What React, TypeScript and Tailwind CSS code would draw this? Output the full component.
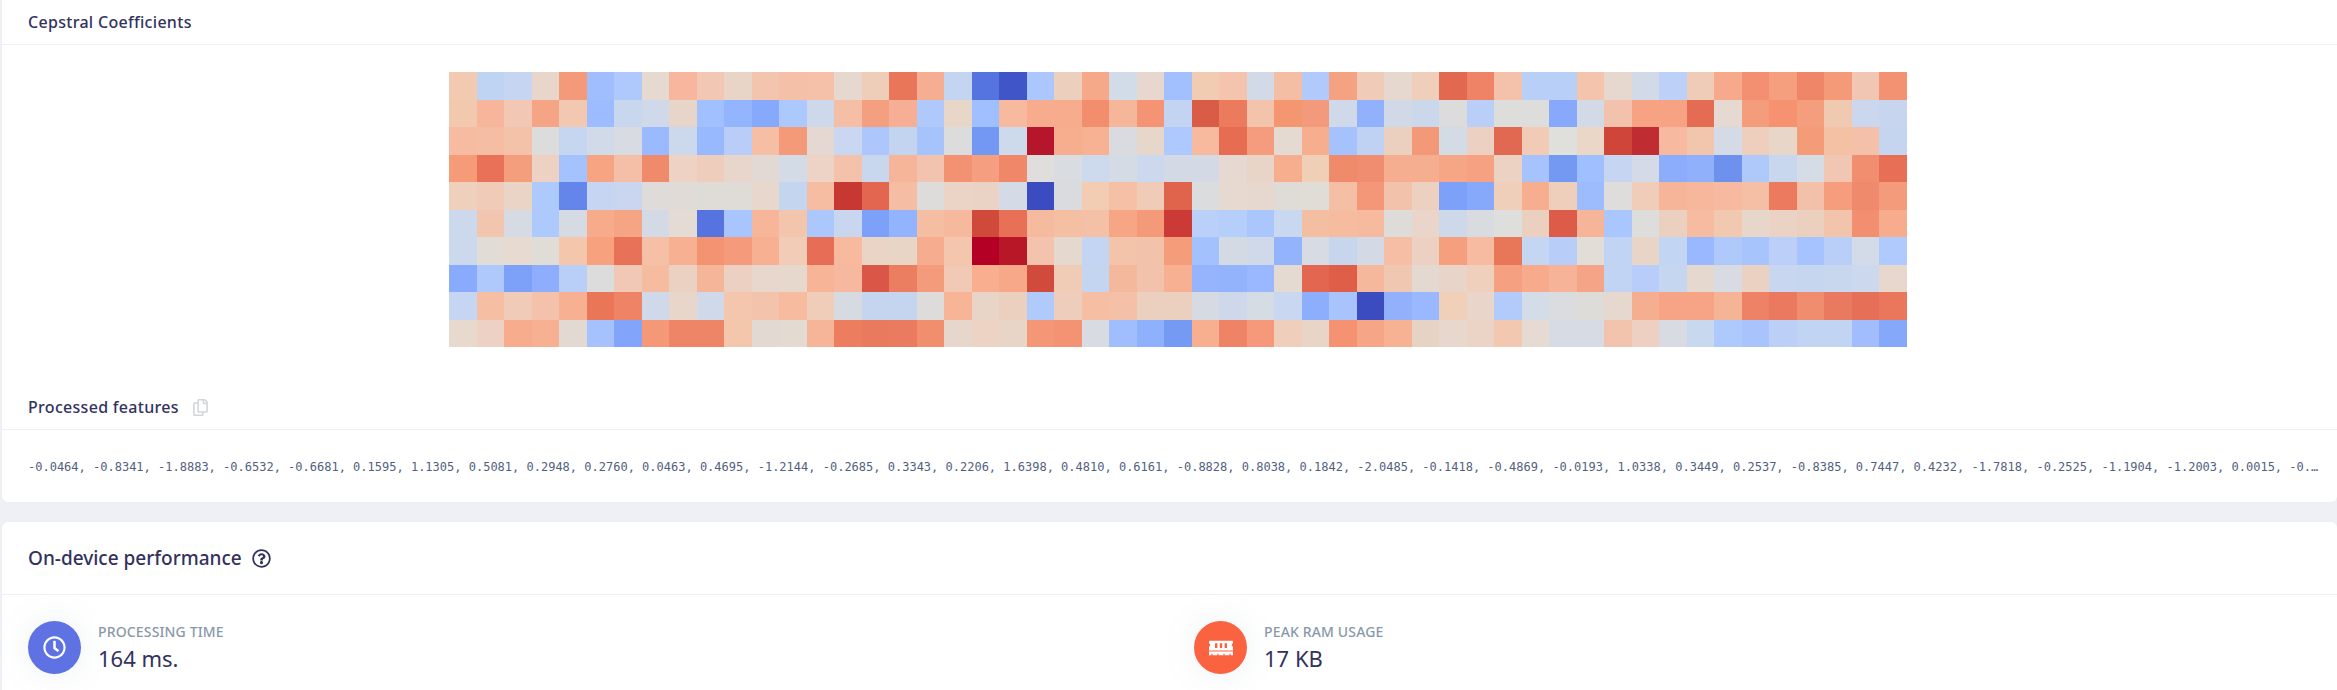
import { FaMemory, FaRegClock, FaRegCopy, FaRegQuestionCircle } from "react-icons/fa";

const rows = [
"f2c9b1 bfd3f3 c5d5f2 e8d6ca f49a7b a0bdfe afc9fc e6d9d0 f7b69d f2c8b5 e8d5c8 f3c5af f5c0a8 f5c1a9 e6d7cf eecdb9 ea7659 f6ae93 c4d5f2 5674e0 4055c8 abc7fd edcfbd f6a988 d2dbe8 e7d7ce a2bffe f1cbb2 f4c4ad d2dae8 f4bea5 b1cafb f5a283 f0cbb7 e6d7cf efcfba e26850 ef8366 f4c1aa b8cff8 b8cff8 f4c4ac e6d8ce d2dae7 bdd0f7 efccb7 f6a98b f29071 f59f7f ef8668 f49a78 f1c6b2 f39272",
"f2c8ae f7b69c f2c7b3 f5a586 f2c8b1 9cbcff c9d7ee cfd9ea e8d5c9 a0c0ff 93b5fe 86a9fb acc8fd cdd8ea f4bfa5 f49f80 f6af94 afc9fc e8d6c9 a0bffe f7ba9f f7ac8e f7ac8e f28e6d f6b69a f49475 c2d4f1 d85c46 ec7a5c f4c3ab f4966f f49a7c cfd9ea 92b1fd d1d9e6 cbd8ec dcdcdc b9cff8 dddddb dddddb 87a8fb d2dae7 f3c2ad f6a283 f6a283 e36c52 e5d9d1 f49c7c f6926f f59e7e efcab0 cad7ef c7d5ee",
"f7bba1 f5bda3 f3c2a9 dddcdc c6d5f0 d0dae8 d8dbe2 9ab9ff ccd9ec 98b9fe bacdf8 f5bea5 f49a79 e5d8d2 c9d8f0 adc7fc c2d4f0 a6c3fc dcdcdc 7398f3 ccdaec b5162b f7ae8f f7b294 d9dbe0 e7d6ca aec9fd f7ba9f e66d52 f49c7d e5dad2 f6ae8f a6c2fd bfd2f4 ecd0bf f49978 d3dbe5 ecd1c2 e26951 f2cbb6 dfdfdc ead7c8 cf453a bf2c32 f7b9a0 f2c5ad d4dbe6 eecfbd e8d7c8 f49b77 f4c1a4 f4c0a9 c5d5f0",
"f59b78 e87158 f59e7e edd2c4 a4c2fe f7a482 f5bea7 ef8a6a eed2c3 efcdbc e8d6cd e2d9d4 d3dbe6 ecd3c5 f4c2ab c8d7ee f6b498 f2c3ae f39272 f59e80 ef8768 dfdedc d9dce0 cdd9ec d5dbe5 ccd8ee d3dae6 d3dae6 e5d9d1 e9d4c8 f6ae8e efcfb6 ef8a6b f08d70 f6ae90 f6ae90 f6a585 f6a182 ecd2c3 a7c3fd 7399f2 a0bffe c6d5f2 d4dae7 8cacfc 90b0fc 6f91ee b0c9fb c9d7ee d6dce5 f1c7b3 f08e6f e76f56",
"eed0bd f0cbb8 ead4c6 aec9fc 6485ea c5d5f2 cad6ef dfdbd8 e0dbd7 dfdbd7 dfdbd6 e7d7cc c4d5f0 f6bda2 c83833 e26650 f5bea4 dedcda ebd4c6 ead3c4 d4dbe6 3a4cc0 dadbde f2ccb3 f5c0a6 f0ccb8 e0634c dadcde e6d9cf e6d8cf dfdcd8 e0dcd6 f5bfa6 f49778 f2c3aa ecd1c1 7da0f9 87a9fb efcfba f7ae8f edcfbc 9cbcfd dedddb f0cdb8 f6b498 f6b79c f7baa1 f4bfa5 eb7a5e f3c0a9 f59d7d ef8a6c f49b7c",
"ccd9ec f2c5ae d5dae3 aec9fc d6dbe3 f7ab8b f5a583 d3dae5 e3dbd4 5673e0 a9c5fe f7b599 f4c5ad acc7fc c8d7ef 7da0f8 92b4fe f5bea3 f6b99e d04a3c e77056 f6ba9f f4bfa3 f4c0a6 f6a685 f49a79 cb3a36 bad0f9 b6cefa abc6fd c9d8f1 f4bea3 f5bc9f f6ba9f dedcd8 e9d5c9 cdd9ea d8dce0 dedfdc ebd0bf dc5c49 f6b598 aac6ff dddedc ecd0bf f6bba1 f1c8b0 e6d7ca ead3c5 ebd0c0 f2c4ab f18f70 f6ac8d",
"ccd9ec e1dcd6 e7dad0 e0dcd6 f4c6ab f7a17f e87258 f5c0a5 f7b091 f49372 f59a7b f7b092 f2ccb7 e86d56 f7ba9f e9d4c6 e8d5c6 f6ad8f f5c6ae b30024 b81728 f4c3ad e5d9cf c3d5f3 f3c4aa f3c2aa f59c7a a3c1fd d4dae4 cfd9e9 93b3fd d6dbe4 c7d6ed d4dae5 f6bfa5 ecd1c2 f59f7e f7bba2 e87659 c5d6f2 b8cdf8 e2ddd6 c2d4f3 e9d4c8 c2d5f2 99b8ff b0c9fb a8c4fc bbcff8 a6c3ff b9cff8 d3dbe8 b0cafd",
"88abfd afc9fc 7da0f8 8eadfd b9cff8 dcdcdc f1c8b6 f5bca0 ebd1c2 f4b598 ecd1c2 e7d7cd e7d8ce f7b496 f6b99f da5747 eb7d60 f39b7a f2c9b4 f8ae8f f6a888 d04b3c f0cbb6 c4d5f2 f4b89c f3c2aa f7b091 96b4fd 93b3fd 99b8ff e4dad2 e36650 de5e48 f5b89d f0c8b2 e4d9d1 e8d4c9 eed0bd f5a080 f7ab8c f6b397 f6a487 c2d4f3 b8cdf9 c5d6f0 e5d8cf d8dbe2 ebd1c2 c8d7ef c7d6ef c9d7ee ccd8ed e8d7cd",
"c6d5f1 f6bea3 f0cbb8 f4c1aa f7b092 ea7658 ee8366 cfd9ea e8d6cb cfd9ea f4c6ad f3c3ab f7bba0 efcdb9 d6dbe2 c5d4ef c5d4ef dedcda f7b497 e8d5c8 ebd0c0 b0cafc eecdbc f6bea2 f4c0a7 ebd0c0 ebd0bf d6dbe3 cfd8eb d5dce4 c9d8f0 8dadfd a9c4fd 3a4cc0 93b0fd 99b8ff f0d0b8 e9d5c9 b3cbfb d4dce7 dadce0 dedcd9 e6d8ce f6ae90 f6a485 f6a485 f5b496 ed8266 ea7960 f08d6f e97a5f e66f58 ea775c",
"e8d9ce ecd1c4 f7ac8e f7b092 e2d9d3 a5c2fe 82a4fb f49877 ef8567 ef8567 f4c6ac e2d9d3 e3dad2 f6b598 ec7d5f ea7a5e eb7b60 f08e6e e7d6cc edd3c4 e9d4c8 f49776 f49374 d8dbe2 a0befe 8fb0fd 759af3 f7af90 ef8366 f5997a efcebb e8d5c8 f49272 f6a687 f7b193 e7d3c3 e7d7cc ebd3c5 f3c8b0 e5dbd2 d6dbe4 d6dbe4 f3c4ad edd0c1 d8dbe1 c8d8ee aec9fc a9c4fc bcd0f7 c2d4f3 c2d4f3 a1bdfd 86a8fb",
].map((r) => r.split(" "));

const features =
  "-0.0464, -0.8341, -1.8883, -0.6532, -0.6681, 0.1595, 1.1305, 0.5081, 0.2948, 0.2760, 0.0463, 0.4695, -1.2144, -0.2685, 0.3343, 0.2206, 1.6398, 0.4810, 0.6161, -0.8828, 0.8038, 0.1842, -2.0485, -0.1418, -0.4869, -0.0193, 1.0338, 0.3449, 0.2537, -0.8385, 0.7447, 0.4232, -1.7818, -0.2525, -1.1904, -1.2003, 0.0015, -0.5218, 0.1204, 0.6630";

function Heatmap() {
  return (
    <svg width="1458" height="275" viewBox="0 0 53 10" preserveAspectRatio="none" className="block" shapeRendering="crispEdges">
      {rows.map((row, y) => row.map((c, x) => <rect key={`${x}-${y}`} x={x} y={y} width="1" height="1" fill={`#${c}`} />))}
    </svg>
  );
}

function Stat({ icon, color, label, value }: { icon: React.ReactNode; color: string; label: string; value: string }) {
  return (
    <div className="flex items-center px-[26px] py-[26px]">
      <div className={`flex h-[53px] w-[53px] shrink-0 items-center justify-center rounded-full text-white shadow-[0_0_32px_rgba(136,152,170,0.15)] ${color}`}>
        {icon}
      </div>
      <div className="ml-[17px]">
        <div className="-mt-[1px] text-[14px] leading-[20px] font-medium tracking-[0.15px] uppercase text-[#8898aa]">{label}</div>
        <div className="mt-[2px] text-[22px] leading-[28px] font-normal text-[#32325d]">{value}</div>
      </div>
    </div>
  );
}

export default function App() {
  return (
    <div className="h-[690px] overflow-hidden bg-[#eef0f5] pl-[2px] font-['Noto_Sans','Open_Sans',sans-serif]">
      <div className="h-[502px] rounded-b-md bg-white">
        <div className="h-[45px] border-b border-[#eff1f5] pl-[26px] pt-[10px] text-[16px] leading-[24px] font-medium tracking-[0.3px] text-[#32325d]">
          Cepstral Coefficients
        </div>
        <div className="flex h-[340px] justify-center pl-[17px] pt-[27px]">
          <Heatmap />
        </div>
        <div className="flex h-[45px] items-center gap-[13px] border-b border-[#eff1f5] pl-[26px] text-[16px] font-medium tracking-[0.3px] text-[#32325d]">
          Processed features
          <FaRegCopy className="text-[17px] text-[#d3d7dc]" />
        </div>
        <div className="truncate pl-[26px] pr-[15px] pt-[27px] font-['DejaVu_Sans_Mono',monospace] text-[12px] leading-[20px] text-[#525f7f]">
          {features}
        </div>
      </div>
      <div className="mt-[20px] rounded-t-md bg-white">
        <div className="flex h-[73px] items-center gap-[10px] border-b border-[#eff1f5] pl-[26px] text-[19px] font-medium text-[#32325d]">
          On-device performance
          <FaRegQuestionCircle className="text-[19px]" />
        </div>
        <div className="grid grid-cols-2 pr-[3px]">
          <Stat icon={<FaRegClock className="text-[23px]" />} color="bg-[#5e72e4]" label="Processing time" value="164 ms." />
          <Stat icon={<FaMemory className="text-[24px]" />} color="bg-[#fb6340]" label="Peak RAM usage" value="17 KB" />
        </div>
      </div>
    </div>
  );
}
